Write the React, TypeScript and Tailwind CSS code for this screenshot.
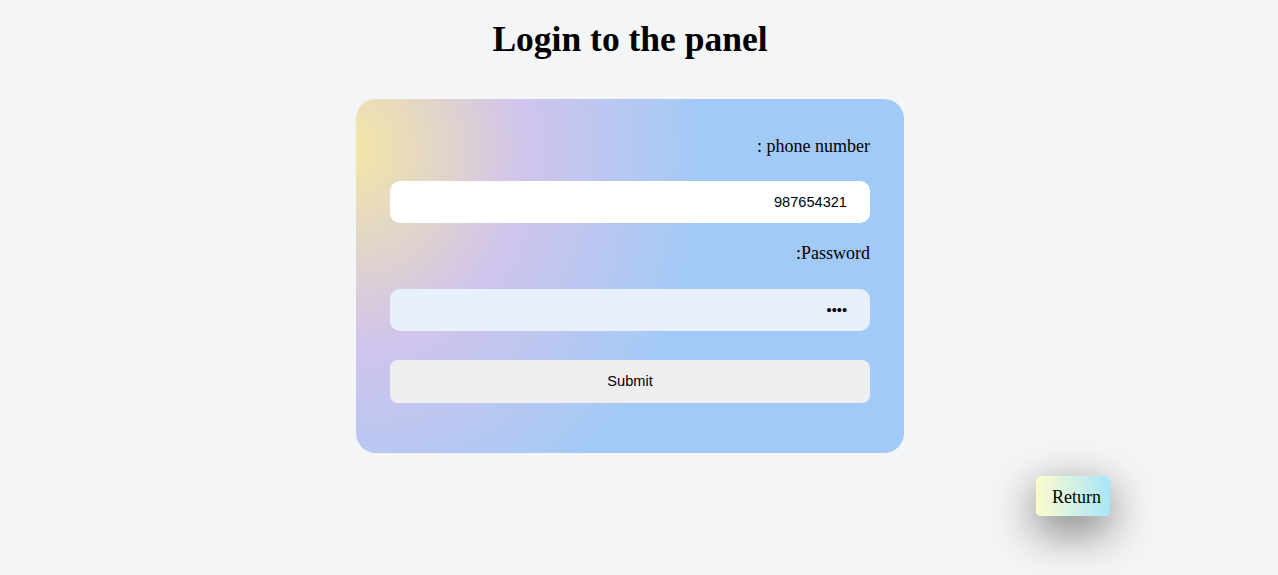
import React from "react";

export default function App() {
  return (
    <div className="min-h-[575px] bg-[#f4f5f7] pr-[18px] pt-[19px] font-['Liberation_Serif','Times_New_Roman',serif] text-black">
      <h1 className="text-center text-[35.5px] font-bold leading-[40px]">Login to the panel</h1>
      <div className="mt-[40px] flex justify-center">
        <form
          className="flex w-[548px] flex-col rounded-[20px] bg-[radial-gradient(ellipse_350px_410px_at_0%_14%,#f3e6a6_0%,#d0c4ec_48%,#a2caf6_100%)] px-[34px] pb-[50px] pt-[37px]"
          onSubmit={(e) => e.preventDefault()}
        >
          <label dir="rtl" className="h-[21px] text-right text-[18px] leading-[21px]">
            phone number :
          </label>
          <input
            type="text"
            defaultValue="987654321"
            className="mt-[24px] h-[42px] rounded-[10px] bg-white px-[23px] text-right font-['Liberation_Sans',Arial,sans-serif] text-[14.6px] outline-none"
          />
          <label dir="rtl" className="mt-[20px] h-[21px] text-right text-[18px] leading-[21px]">
            Password:
          </label>
          <input
            type="password"
            defaultValue="1234"
            className="mt-[25px] h-[42px] rounded-[10px] bg-[#e8f0fe] px-[23px] text-right font-['Liberation_Sans',Arial,sans-serif] text-[14.6px] outline-none"
          />
          <button
            type="submit"
            className="mt-[29px] h-[43px] rounded-[8px] bg-[#efefef] font-['Liberation_Sans',Arial,sans-serif] text-[14.6px]"
          >
            Submit
          </button>
        </form>
      </div>
      <div className="mt-[23px] flex justify-end pr-[150px]">
        <button className="h-[40px] w-[74px] rounded-[5px] bg-[linear-gradient(90deg,#fefccb,#a8e5fb)] pl-[7px] pt-[3px] text-[18px] shadow-[0_14px_45px_rgba(0,0,0,0.55)]">
          Return
        </button>
      </div>
    </div>
  );
}
